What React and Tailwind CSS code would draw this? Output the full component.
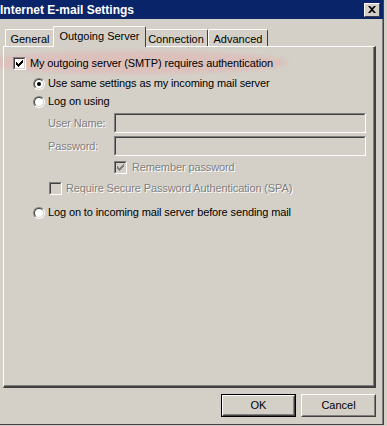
import React from "react";

const font = "font-['Liberation_Sans',Arial,sans-serif]";
const dis = "text-[#808080] [text-shadow:1px_1px_0_#ffffff]";

function Check({ checked, disabled }) {
  return (
    <div className="w-[13px] h-[13px] shrink-0 border border-t-[#808080] border-l-[#808080] border-r-white border-b-white">
      <div
        className={
          "w-full h-full border border-t-[#404040] border-l-[#404040] border-r-[#d4d0c8] border-b-[#d4d0c8] flex items-center justify-center " +
          (disabled ? "bg-[#d4d0c8]" : "bg-white")
        }
      >
        {checked && (
          <svg width="7" height="7" viewBox="0 0 7 7">
            <path
              d="M0 2h1v1h1v1h1v-1h1v-1h1v-1h1v-1h1v3h-1v1h-1v1h-1v1h-1v1h-1v-1h-1v-1h-1z"
              fill={disabled ? "#808080" : "#000000"}
            />
          </svg>
        )}
      </div>
    </div>
  );
}

function Radio({ checked }) {
  return (
    <div className="w-[12px] h-[12px] shrink-0 rounded-full border border-t-[#808080] border-l-[#808080] border-r-white border-b-white">
      <div className="w-full h-full rounded-full bg-white border border-t-[#404040] border-l-[#404040] border-r-[#d4d0c8] border-b-[#d4d0c8] flex items-center justify-center">
        {checked && <div className="w-[4px] h-[4px] rounded-full bg-black" />}
      </div>
    </div>
  );
}

function Field() {
  return (
    <div className="flex-1 h-[20px] border border-t-[#808080] border-l-[#808080] border-r-white border-b-white">
      <div className="w-full h-full border border-t-[#404040] border-l-[#404040] border-r-[#d4d0c8] border-b-[#d4d0c8] bg-[#d4d0c8]" />
    </div>
  );
}

function Tab({ label, selected, w }) {
  if (selected) {
    return (
      <div
        className={
          w +
          " relative z-10 ml-[-2px] mr-[-2px] h-[21px] border-t border-l border-white border-r border-r-[#404040] rounded-t-[2px] flex items-start justify-center pt-[2px] bg-[#d4d0c8]"
        }
      >
        <span className="text-[11px] leading-[14px]">{label}</span>
      </div>
    );
  }
  return (
    <div
      className={
        w +
        " h-[18px] border-t border-l border-white border-r border-r-[#404040] rounded-t-[2px] flex items-start justify-center pt-[2px]"
      }
    >
      <span className="text-[11px] leading-[14px]">{label}</span>
    </div>
  );
}

function Button({ label, isDefault }) {
  return (
    <div
      className={
        "w-[75px] h-[23px] " + (isDefault ? "border border-black" : "")
      }
    >
      <div className="w-full h-full border border-t-white border-l-white border-r-[#404040] border-b-[#404040]">
        <div className="w-full h-full border border-t-[#d4d0c8] border-l-[#d4d0c8] border-r-[#808080] border-b-[#808080] flex items-center justify-center">
          <span className="text-[11px]">{label}</span>
        </div>
      </div>
    </div>
  );
}

export default function App() {
  return (
    <div className={"relative w-[387px] h-[426px] bg-[#d4d0c8] overflow-hidden text-black " + font}>
      {/* annotation highlight */}
      <div className="absolute left-[-14px] top-[51px] w-[302px] h-[23px] rounded-[50%] bg-[#dcc0bc] blur-[2px]" />

      <div className="relative flex">
        {/* window */}
        <div className="w-[384px] h-[425px] flex flex-col border-r border-b border-[#404040]">
          <div className="h-[19px] bg-[#0a246a] flex items-center justify-between pr-[3px]">
            <span className="text-white font-bold text-[12px] leading-none">
              Internet E-mail Settings
            </span>
            <div className="w-[16px] h-[14px] bg-[#d4d0c8] border border-t-white border-l-white border-r-[#404040] border-b-[#404040] flex items-center justify-center">
              <svg width="8" height="7" viewBox="0 0 8 7">
                <path
                  d="M0 0h2l2 2 2-2h2l-3 3.5 3 3.5h-2l-2-2-2 2h-2l3-3.5z"
                  fill="#000"
                />
              </svg>
            </div>
          </div>

          <div className="flex-1 flex flex-col pl-[3px] pr-[6px] border-r border-[#808080]">
            {/* tabs */}
            <div className="mt-[8px] h-[20px] flex items-end pl-[2px]">
              <Tab label="General" w="w-[50px]" />
              <Tab label="Outgoing Server" w="w-[93px]" selected />
              <Tab label="Connection" w="w-[64px]" />
              <Tab label="Advanced" w="w-[60px]" />
            </div>

            {/* panel */}
            <div className="mt-[-1px] h-[342px] border-l border-t border-white border-r-2 border-b-2 border-r-[#404040] border-b-[#404040] text-[11px] tracking-[-0.12px]">
              <div className="w-full h-full border-r border-b border-[#808080] flex flex-col">
                <div className="mt-[10px] h-[13px] flex items-center pl-[9px] gap-[4px]">
                  <Check checked />
                  <span>My outgoing server (SMTP) requires authentication</span>
                </div>
                <div className="mt-[7px] h-[13px] flex items-center pl-[29px] gap-[3px]">
                  <Radio checked />
                  <span>Use same settings as my incoming mail server</span>
                </div>
                <div className="mt-[5px] h-[13px] flex items-center pl-[29px] gap-[3px]">
                  <Radio />
                  <span>Log on using</span>
                </div>
                <div className="mt-[5px] h-[20px] flex items-center pl-[44px] pr-[7px]">
                  <span className={"w-[66px] " + dis}>User Name:</span>
                  <Field />
                </div>
                <div className="mt-[3px] h-[20px] flex items-center pl-[44px] pr-[7px]">
                  <span className={"w-[66px] " + dis}>Password:</span>
                  <Field />
                </div>
                <div className="mt-[5px] h-[13px] flex items-center pl-[110px] gap-[5px]">
                  <Check checked disabled />
                  <span className={dis}>Remember password</span>
                </div>
                <div className="mt-[8px] h-[13px] flex items-center pl-[45px] gap-[4px]">
                  <Check disabled />
                  <span className={dis}>Require Secure Password Authentication (SPA)</span>
                </div>
                <div className="mt-[11px] h-[13px] flex items-center pl-[29px] gap-[3px]">
                  <Radio />
                  <span>Log on to incoming mail server before sending mail</span>
                </div>
              </div>
            </div>

            {/* buttons */}
            <div className="mt-[6px] flex justify-end gap-[5px]">
              <Button label="OK" isDefault />
              <Button label="Cancel" />
            </div>
          </div>
        </div>
      </div>
    </div>
  );
}
